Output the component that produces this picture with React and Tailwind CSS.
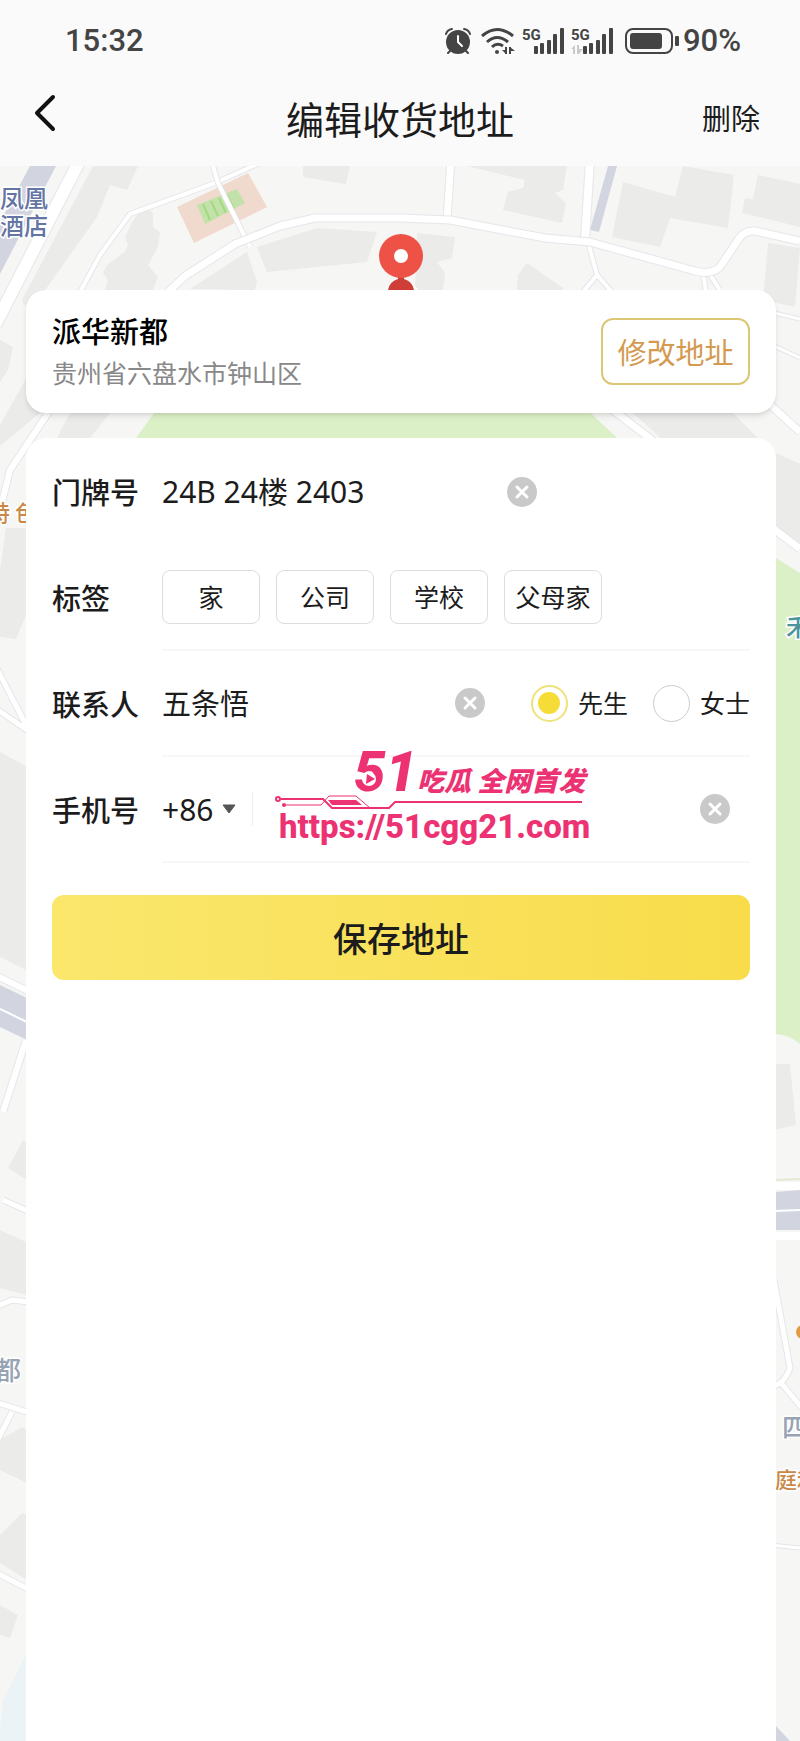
import { useState } from 'react';

const TAGS = ['家', '公司', '学校', '父母家'];

const Road = ({ d, w = 6 }) => (
  <g fill="none" strokeLinejoin="round">
    <path d={d} stroke="#e6e6eb" strokeWidth={w + 2} />
    <path d={d} stroke="#ffffff" strokeWidth={w} />
  </g>
);

const MapBackground = () => (
  <svg
    className="absolute inset-0 w-full h-full"
    viewBox="0 166 800 1575"
    preserveAspectRatio="xMinYMin slice"
    aria-hidden="true"
  >
    <rect x="0" y="166" width="800" height="1575" fill="#f6f6f5" />

    {/* parks and water */}
    <path d="M160 405H582L630 450L776 558L800 573V1044Q790 1035 776 1034H136V438Z" fill="#dcf0c8" />
    <path d="M0 1741V1730L3 1700L26 1655V1741Z" fill="#ecf3f6" />

    {/* buildings */}
    <g fill="#ebebea">
      <path d="M93 166H138L127 190L110 185L97 217L45 290L24 306L22 300Z" />
      <path d="M143 206L153 213V227L160 232L158 247L148 265L158 277L153 290H105L108 280L103 273L107 265L125 252L128 245L125 237L132 223Z" />
      <path d="M257 247L317 228L377 232L367 262L267 272Z" />
      <path d="M190 289L247 252L257 282L255 290Z" />
      <path d="M303 166H350L346 184L303 177Z" />
      <path d="M467 166H567L563 190L555 193L566 203L562 223L503 210L508 192L523 188L525 180Z" />
      <path d="M417 233L455 237L452 258L437 262L445 273L443 290H415Z" />
      <path d="M518 275L527 263L563 288V290H517Z" />
      <path d="M623 182L675 197L683 166L734 175L728 228L670 218L660 247L612 237Z" />
      <path d="M758 175L800 184V227L742 213L745 198L753 199Z" />
      <path d="M768 243L800 248L795 307L763 300Z" />
      <path d="M0 340L13 347L8 370L0 382Z" />
      <path d="M28 375L0 425V446L40 413Z" />
      <path d="M70 413H110L90 438H57Z" />
      <path d="M633 413H733L760 440H663Z" />
      <path d="M774 452L800 464V545L774 525Z" />
      <path d="M6 528H26V615L16 639L0 637V570Z" />
      <path d="M0 752L26 766V970L0 957Z" />
      <path d="M8 1168L23 1140L27 1143V1180Z" />
      <path d="M0 1230L26 1242V1295L0 1288Z" />
      <path d="M0 1440L22 1427L27 1430V1483L0 1470Z" />
      <path d="M0 1535L22 1513L27 1515V1580L0 1563Z" />
      <path d="M0 1605L18 1615L10 1638L0 1635Z" />
      <path d="M775 1064H790L796 1125L775 1130Z" />
    </g>

    {/* railways */}
    <g fill="#d2d5e0">
      <path d="M30 166H56L0 274V222Z" />
      <path d="M608 166H617L599 232L590 230Z" />
      <path d="M0 985L27 998V1040L0 1027Z" />
      <path d="M775 1192L800 1190V1230H775Z" />
      <path d="M775 1725L790 1741H775Z" />
    </g>
    <path d="M0 1009L27 1022M775 1211L800 1210" stroke="#ffffff" strokeWidth="2" />
    <path d="M775 1180L800 1179" stroke="#e3ead2" strokeWidth="2" />
    <path d="M775 1186H800M775 1236H800" stroke="#ffffff" strokeWidth="8" />

    {/* sports field */}
    <path d="M177 207L248 173L267 207L194 243Z" fill="#efdacd" />
    <path d="M197 205L237 189L245 203L205 224Z" fill="#c3e2aa" />
    <path d="M203 204L210 220M211 201L218 216M219 198L226 213M227 195L234 209" stroke="#a3d982" strokeWidth="2" />

    {/* roads */}
    <Road d="M80 160L-5 325" w={12} />
    <Road d="M262 162L215 183L130 214L100 255L80 292" w={4} />
    <Road d="M212 162L218 183L250 247" w={4} />
    <Road d="M451 160L447 220" w={7} />
    <Road d="M590 160L585 240" w={8} />
    <Road d="M588 242L597 275L612 292M597 275L583 292M703 272L706 292M710 275L720 290" w={4} />
    <Road d="M168 292L185 276L235 244L280 226L315 218H400L450 220L545 238L590 242L695 271Q715 276 722 264L738 240Q744 230 755 231L800 241" w={7} />
    <Road d="M770 312L800 319M770 344L800 358" w={3} />
    <Road d="M50 410L10 470L-5 530" w={6} />
    <Road d="M600 400L665 450M765 400L800 432M770 526L800 549" w={7} />
    <Road d="M-5 665L26 725M-5 708L30 732" w={5} />
    <Road d="M-5 975L30 992M26 1040L3 1112" w={6} />
    <Road d="M3 1200L30 1212M-5 1307L12 1300L30 1302" w={5} />
    <Road d="M-5 1402L30 1413M-5 1445L12 1412M-5 1572L30 1590" w={5} />
    <Road d="M774 1280L790 1368Q784 1385 770 1387M782 1384L802 1408" w={5} />
    <Road d="M770 1545L800 1548" w={3} />

    {/* place labels */}
    <g
      fontFamily='"Noto Sans CJK SC", sans-serif'
      fontWeight="500"
      stroke="#ffffff"
      strokeWidth="3"
      paintOrder="stroke"
    >
      <g fill="#6474a3" fontSize="24">
        <text x="0" y="207">凤凰</text>
        <text x="0" y="235">酒店</text>
      </g>
      <g fill="#c9894a" fontSize="22">
        <text x="-12" y="521">特</text>
        <text x="15" y="521">色</text>
        <text x="775" y="1488">庭和</text>
      </g>
      <text x="786" y="636" fontSize="24" fill="#4b949c">禾</text>
      <g fill="#98a4b3" fontSize="26">
        <text x="-5" y="1380">都</text>
        <text x="782" y="1437">四</text>
      </g>
    </g>
    <circle cx="803" cy="1332" r="7" fill="#e39a45" />

    {/* pin */}
    <ellipse cx="401" cy="291" rx="17" ry="9" fill="#ffffff" />
    <path d="M398 274H404V279Q413 282 414 290H388Q389 282 398 279Z" fill="#cf3f38" />
    <circle cx="401" cy="256" r="22" fill="#ee5246" />
    <circle cx="401" cy="256" r="7" fill="#ffffff" />
  </svg>
);

const AlarmIcon = () => (
  <svg className="w-[26px] h-[28px]" viewBox="0 0 26 28" fill="none" stroke="#444444" strokeLinecap="round">
    <circle cx="13" cy="15" r="12" fill="#444444" stroke="none" />
    <path d="M1 7Q2 3 7 2M25 7Q24 3 19 2M5 24L3 26M21 24L23 26" strokeWidth="2" />
    <path d="M13 9V15L17 19" stroke="#ffffff" strokeWidth="2" />
  </svg>
);

const WifiIcon = () => (
  <svg className="w-[34px] h-[28px]" viewBox="0 0 34 28" fill="none" stroke="#444444" strokeWidth="3">
    <path d="M1 9Q16 -4 32 9M6 15Q16 6 27 15M11 20Q16 15 22 19" />
    <circle cx="16" cy="25" r="2" fill="#444444" stroke="none" />
    <path d="M25 20V27M29 20V27" strokeWidth="2" />
    <path d="M25 27L21 23H25ZM29 20L34 24H29Z" fill="#444444" stroke="none" />
  </svg>
);

const SignalIcon = ({ idle }) => (
  <svg className="w-[44px] h-[28px]" viewBox="0 0 44 28" fill="#444444">
    <text x="0" y="13" fontSize="15" fontWeight="700" fontFamily="Roboto, sans-serif">5G</text>
    {idle && <path d="M0 22L4 18V27H2V22ZM6 18H8V22H12L8 27H6Z" fill="#c9c9c9" />}
    <rect x="12" y="19" width="4" height="8" rx="1" />
    <rect x="18" y="16" width="4" height="11" rx="1" />
    <rect x="25" y="13" width="4" height="14" rx="1" />
    <rect x="31" y="7" width="4" height="20" rx="1" />
    <rect x="38" y="1" width="4" height="26" rx="1" />
  </svg>
);

const BatteryIcon = () => (
  <svg className="w-[54px] h-[28px]" viewBox="0 0 54 28" fill="#444444">
    <rect x="1" y="2" width="46" height="24" rx="7" fill="none" stroke="#444444" strokeWidth="2" />
    <rect x="5" y="6" width="32" height="16" rx="3" />
    <rect x="50" y="9" width="4" height="10" rx="1" />
  </svg>
);

const ClearButton = ({ label, onClick }) => (
  <button type="button" aria-label={label} onClick={onClick} className="shrink-0">
    <svg className="size-[30px]" viewBox="0 0 30 30" fill="none">
      <circle cx="15" cy="15" r="15" fill="#c9c9c9" />
      <path d="M10 10L20 20M20 10L10 20" stroke="#ffffff" strokeWidth="3" strokeLinecap="round" />
    </svg>
  </button>
);

const Title = ({ value, name, checked, onChange }) => (
  <label className="flex items-center gap-[10px] text-[25px]">
    <input
      type="radio"
      name={name}
      checked={checked}
      onChange={() => onChange(value)}
      className="appearance-none grid place-items-center size-[37px] rounded-full border border-[#cccccc] checked:border-2 checked:border-[#eee27a] before:size-[22px] before:rounded-full checked:before:bg-[#f6dc37]"
    />
    {value}
  </label>
);

const Promo = () => (
  <div className="absolute left-[248px] top-[309px] w-[314px] text-[#ec3272] pointer-events-none">
    <div className="flex items-end h-[48px] pl-[80px] whitespace-nowrap">
      <span className="font-[Roboto,sans-serif] font-black italic text-[56px] leading-[46px]">51</span>
      <span className="font-['Noto_Sans_CJK_SC',sans-serif] font-black italic text-[27px] leading-[30px]">吃瓜 全网首发</span>
    </div>
    <svg className="absolute left-0 top-0 w-[314px] h-[66px]" viewBox="0 0 314 66" fill="none" stroke="#ec3272">
      <circle cx="95" cy="32" r="7" fill="#ffffff" stroke="none" />
      <path d="M93 27L101 32L92 37Z" fill="#ec3272" stroke="none" />
      <circle cx="4" cy="52" r="2" strokeWidth="2" />
      <path d="M7 52H49L58 61H115L121 55H308" strokeWidth="2" />
      <circle cx="10" cy="58" r="2" fill="#ec3272" stroke="none" />
      <path d="M10 58H47L55 49H82L96 61" strokeWidth="1" />
      <path d="M54 53H82L88 58H58Z" fill="#ec3272" stroke="none" />
    </svg>
    <p className="mt-[12px] pl-[5px] whitespace-nowrap font-[Roboto,sans-serif] font-extrabold text-[33px] leading-[40px]">
      https://51cgg21.com
    </p>
  </div>
);

const App = () => {
  const [room, setRoom] = useState('24B 24楼 2403');
  const [contact, setContact] = useState('五条悟');
  const [phone, setPhone] = useState('');
  const [gender, setGender] = useState('先生');

  return (
    <div className="min-h-screen flex flex-col bg-[#fafafa] text-[#1c1c1c] font-['Noto_Sans_CJK_SC',sans-serif]">

      {/* STATUS BAR */}
      <div className="flex items-center h-[82px] pl-[65px] pr-[59px] text-[31px] font-medium text-[#444444] font-[Roboto,sans-serif]">
        <span>15:32</span>
        <div className="ml-auto flex items-center">
          <AlarmIcon />
          <span className="ml-[10px]"><WifiIcon /></span>
          <span className="ml-[7px]"><SignalIcon /></span>
          <span className="ml-[5px]"><SignalIcon idle /></span>
          <span className="ml-[10px]"><BatteryIcon /></span>
          <span className="ml-[4px]">90%</span>
        </div>
      </div>

      {/* HEADER */}
      <header className="grid grid-cols-[1fr_auto_1fr] items-center h-[84px] px-[34px] pb-[12px]">
        <button type="button" aria-label="返回" className="justify-self-start pb-[10px]">
          <svg className="w-[22px] h-[38px]" viewBox="0 0 22 38" fill="none" stroke="#111111" strokeWidth="4" strokeLinecap="round" strokeLinejoin="round">
            <path d="M19 3L3 19L19 35" />
          </svg>
        </button>
        <h1 className="text-[38px] leading-[48px]">编辑收货地址</h1>
        <button type="button" className="justify-self-end pr-[6px] text-[29px]">删除</button>
      </header>

      <main className="relative flex-1 flex flex-col pt-[124px] pl-[26px] pr-[24px] overflow-hidden">
        <MapBackground />

        {/* ADDRESS */}
        <section className="relative flex items-center justify-between h-[123px] px-[26px] rounded-[20px] bg-white shadow-md">
          <div className="pb-[4px]">
            <h2 className="text-[29px] leading-[44px] font-medium text-black">派华新都</h2>
            <p className="text-[25px] leading-[40px] text-[#888888]">贵州省六盘水市钟山区</p>
          </div>
          <button type="button" className="w-[149px] h-[67px] rounded-[12px] border-2 border-[#dcc777] text-[29px] text-[#d39a50]">
            修改地址
          </button>
        </section>

        {/* FORM */}
        <form className="relative flex-1 mt-[25px] px-[26px] rounded-t-[20px] bg-white text-[29px]" onSubmit={(e) => e.preventDefault()}>
          <div className="flex items-center h-[107px]">
            <label htmlFor="room" className="w-[110px] shrink-0 font-medium">门牌号</label>
            <input
              id="room"
              value={room}
              onChange={(e) => setRoom(e.target.value)}
              className="w-[345px] min-w-0 outline-none text-[30px] font-['Noto_Sans','Noto_Sans_CJK_SC',sans-serif]"
            />
            <ClearButton label="清除门牌号" onClick={() => setRoom('')} />
          </div>

          <div className="flex items-center h-[106px]">
            <span className="w-[110px] shrink-0 font-medium">标签</span>
            <div className="flex-1 flex items-center gap-[16px] h-full border-b-2 border-[#f7f7f7]">
              {TAGS.map((tag) => (
                <button key={tag} type="button" className="w-[98px] h-[54px] rounded-[8px] border border-[#dddddd] text-[25px]">
                  {tag}
                </button>
              ))}
            </div>
          </div>

          <div className="flex items-center h-[106px]">
            <label htmlFor="contact" className="w-[110px] shrink-0 font-medium">联系人</label>
            <div className="flex-1 min-w-0 flex items-center h-full border-b-2 border-[#f7f7f7]">
              <input
                id="contact"
                value={contact}
                onChange={(e) => setContact(e.target.value)}
                className="flex-1 min-w-0 outline-none"
              />
              <ClearButton label="清除联系人" onClick={() => setContact('')} />
              <div className="flex gap-[25px] ml-[46px]">
                <Title name="gender" value="先生" checked={gender === '先生'} onChange={setGender} />
                <Title name="gender" value="女士" checked={gender === '女士'} onChange={setGender} />
              </div>
            </div>
          </div>

          <div className="flex items-center h-[106px]">
            <label htmlFor="phone" className="w-[110px] shrink-0 font-medium">手机号</label>
            <div className="flex-1 min-w-0 flex items-center h-full pr-[20px] border-b-2 border-[#f7f7f7]">
              <select aria-label="国家区号" className="appearance-none w-[60px] outline-none bg-transparent text-[30px] font-['Noto_Sans','Noto_Sans_CJK_SC',sans-serif]">
                <option>+86</option>
              </select>
              <svg className="w-[14px] h-[10px]" viewBox="0 0 14 10">
                <path d="M1 1H13L7 9Z" fill="#555555" stroke="#555555" strokeLinejoin="round" />
              </svg>
              <span className="w-px h-[34px] ml-[16px] bg-[#eeeeee]" />
              <input
                id="phone"
                type="tel"
                value={phone}
                onChange={(e) => setPhone(e.target.value)}
                className="flex-1 min-w-0 px-[20px] outline-none"
              />
              <ClearButton label="清除手机号" onClick={() => setPhone('')} />
            </div>
          </div>

          <button type="submit" className="w-full h-[85px] mt-[32px] rounded-[12px] bg-linear-to-r from-[#fae76c] to-[#f8dc4a] text-[34px] font-medium">
            保存地址
          </button>

          <Promo />
        </form>
      </main>
    </div>
  );
};

export default App;
